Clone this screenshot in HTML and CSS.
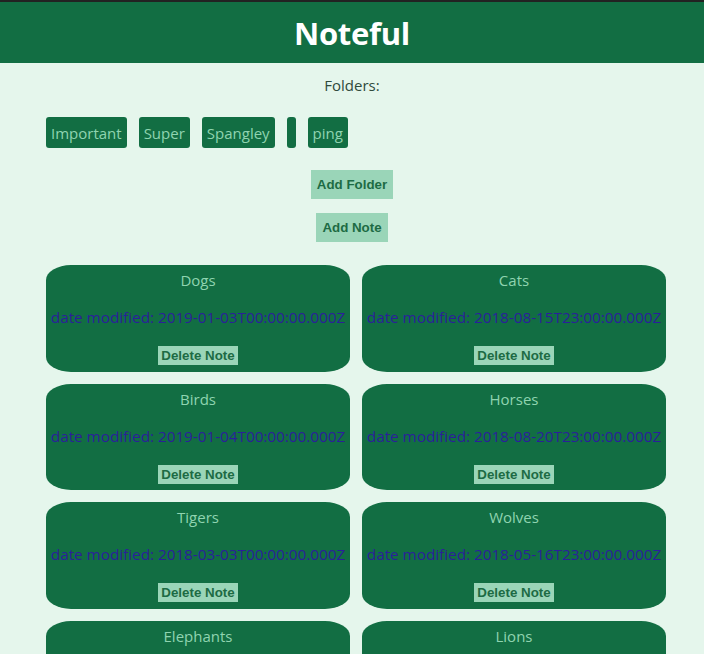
FILE: index.html
```html
<!DOCTYPE html>
<html>
<head>
<meta charset="utf-8">
<link rel="stylesheet" href="styles.css">
</head>
<body>
<header class="top"><h1 class="title">Noteful</h1></header>
<main class="main">
  <p class="folders-label">Folders:</p>
  <ul class="folder-list">
    <li class="folder">Important</li>
    <li class="folder">Super</li>
    <li class="folder">Spangley</li>
    <li class="folder"></li>
    <li class="folder">ping</li>
  </ul>
  <div class="actions">
    <button class="action">Add Folder</button>
    <button class="action">Add Note</button>
  </div>
  <div class="notes">
    <div class="note"><h2 class="note-title">Dogs</h2><p class="note-date">date modified: 2019-01-03T00:00:00.000Z</p><button class="delete">Delete Note</button></div>
    <div class="note"><h2 class="note-title">Cats</h2><p class="note-date">date modified: 2018-08-15T23:00:00.000Z</p><button class="delete">Delete Note</button></div>
    <div class="note"><h2 class="note-title">Birds</h2><p class="note-date">date modified: 2019-01-04T00:00:00.000Z</p><button class="delete">Delete Note</button></div>
    <div class="note"><h2 class="note-title">Horses</h2><p class="note-date">date modified: 2018-08-20T23:00:00.000Z</p><button class="delete">Delete Note</button></div>
    <div class="note"><h2 class="note-title">Tigers</h2><p class="note-date">date modified: 2018-03-03T00:00:00.000Z</p><button class="delete">Delete Note</button></div>
    <div class="note"><h2 class="note-title">Wolves</h2><p class="note-date">date modified: 2018-05-16T23:00:00.000Z</p><button class="delete">Delete Note</button></div>
    <div class="note"><h2 class="note-title">Elephants</h2><p class="note-date">date modified: 2018-04-11T00:00:00.000Z</p><button class="delete">Delete Note</button></div>
    <div class="note"><h2 class="note-title">Lions</h2><p class="note-date">date modified: 2018-06-10T23:00:00.000Z</p><button class="delete">Delete Note</button></div>
  </div>
</main>
</body>
</html>
```
FILE: styles.css
```css
html, body {
  margin: 0;
  padding: 0;
}
body {
  background: #e5f6ec;
  font-family: "Open Sans", "Noto Sans", sans-serif;
  border-top: 2px solid #222;
}
.top {
  background: #126e43;
  height: 61px;
  display: flex;
  align-items: center;
  justify-content: center;
}
.title {
  margin: 0;
  color: #fff;
  font-size: 31px;
  font-weight: 700;
  letter-spacing: -0.3px;
}
.main {
  padding: 0;
}
.folders-label {
  margin: 12px 0 0;
  text-align: center;
  color: #2f4a3c;
  font-size: 15px;
  line-height: 20px;
}
.folder-list {
  list-style: none;
  margin: 22px 0 0 46px;
  padding: 0;
  display: flex;
  gap: 12px;
}
.folder {
  background: #126e43;
  color: #8fd4b0;
  border-radius: 3px;
  height: 31px;
  min-width: 9px;
  padding: 0 5px;
  box-sizing: border-box;
  display: flex;
  align-items: center;
  font-size: 15px;
}
.folder:empty { padding: 0; }
.actions {
  display: flex;
  flex-direction: column;
  align-items: center;
  gap: 14px;
  margin-top: 22px;
}
.action, .delete {
  font-family: "Liberation Sans", Arial, sans-serif;
  font-weight: 700;
  font-size: 13.33px;
  background: #9ad5b8;
  color: #1d6b44;
  border: 0;
  border-radius: 0;
}
.action {
  padding: 7px 6px;
  line-height: 15px;
}
.notes {
  margin: 23px 0 0 46px;
  width: 620px;
  display: grid;
  grid-template-columns: 1fr 1fr;
  gap: 12px;
}
.note {
  background: #126e43;
  border-radius: 25px / 15px;
  height: 106.6px;
  display: flex;
  flex-direction: column;
  align-items: center;
}
.note-title {
  margin: 5px 0 0;
  font-weight: 400;
  font-size: 15px;
  line-height: 20px;
  color: #8fd4b0;
}
.note-date {
  margin: 17px 0 0;
  font-size: 15.25px;
  line-height: 20px;
  color: #2a1f9a;
  white-space: nowrap;
}
.delete {
  margin-top: 19px;
  height: 19px;
  padding: 0 3px;
  line-height: 19px;
}
```
